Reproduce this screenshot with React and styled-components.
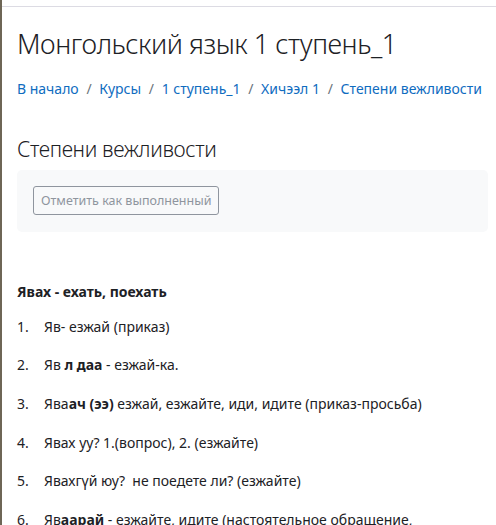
import React from 'react'
import styled, { createGlobalStyle } from 'styled-components'

const GlobalStyle = createGlobalStyle`
  body {
    margin: 0;
    background: #fff;
    font-family: "Noto Sans", "Open Sans", sans-serif;
    color: #1d2125;
  }
`

const Page = styled.div`
  height: 525px;
  overflow: hidden;
  border-left: 2px solid #6e6656;
  padding-top: 6px;
  box-sizing: border-box;
`

const TopLine = styled.div`
  border-top: 1px solid #dcdbe3;
`

const Main = styled.main`
  padding: 0 8px 0 15px;
`

const Title = styled.h1`
  margin: 21px 0 0;
  font-size: 27px;
  font-weight: 300;
  line-height: 1.2;
  letter-spacing: -0.45px;
`

const Crumbs = styled.nav`
  display: flex;
  align-items: center;
  margin-top: 19px;
  font-size: 14px;
  line-height: 20px;
`

const Crumb = styled.a`
  color: #0f6cbf;
  text-decoration: none;
`

const Sep = styled.span`
  color: #6a737b;
  padding: 0 7.7px;
`

const Section = styled.section`
  margin-top: 38px;
`

const SubTitle = styled.h2`
  margin: 0;
  font-size: 21px;
  font-weight: 300;
  line-height: 1.2;
  letter-spacing: -0.35px;
`

const Activity = styled.div`
  margin-top: 7px;
  background: #f8f9fa;
  border-radius: 5px;
  padding: 16px 16px 17px;
`

const DoneButton = styled.button`
  font-family: inherit;
  font-size: 12.5px;
  color: #8f959e;
  background: transparent;
  border: 1px solid #8f959e;
  border-radius: 3px;
  padding: 4px 7px;
  line-height: 19px;
  height: 29px;
`

const Content = styled.div`
  margin-top: 49px;
  font-size: 14px;
  line-height: 21px;
`

const Lead = styled.p`
  margin: 0 0 14px;
  font-weight: 700;
`

const List = styled.ol`
  margin: 0;
  padding: 0;
  list-style: none;
`

const Item = styled.li`
  display: flex;
  margin-bottom: 17.7px;
`

const Num = styled.span`
  width: 27px;
  flex: none;
`

const items = [
  <>Яв- езжай (приказ)</>,
  <>Яв <b>л даа</b> - езжай-ка.</>,
  <>Ява<b>ач (ээ)</b> езжай, езжайте, иди, идите (приказ-просьба)</>,
  <>Явах уу? 1.(вопрос), 2. (езжайте)</>,
  <>Явахгүй юу?&nbsp; не поедете ли? (езжайте)</>,
  <>Яв<b>аарай</b> - езжайте, идите (настоятельное обращение,</>,
]

export default function App() {
  return (
    <Page>
      <GlobalStyle />
      <TopLine />
      <Main>
        <Title>Монгольский язык 1 ступень_1</Title>
        <Crumbs>
          <Crumb href="#">В начало</Crumb>
          <Sep>/</Sep>
          <Crumb href="#">Курсы</Crumb>
          <Sep>/</Sep>
          <Crumb href="#">1 ступень_1</Crumb>
          <Sep>/</Sep>
          <Crumb href="#">Хичээл 1</Crumb>
          <Sep>/</Sep>
          <Crumb href="#">Степени вежливости</Crumb>
        </Crumbs>
        <Section>
          <SubTitle>Степени вежливости</SubTitle>
          <Activity>
            <DoneButton>Отметить как выполненный</DoneButton>
          </Activity>
        </Section>
        <Content>
          <Lead>Явах - ехать, поехать</Lead>
          <List>
            {items.map((it, i) => (
              <Item key={i}>
                <Num>{i + 1}.</Num>
                <span>{it}</span>
              </Item>
            ))}
          </List>
        </Content>
      </Main>
    </Page>
  )
}
